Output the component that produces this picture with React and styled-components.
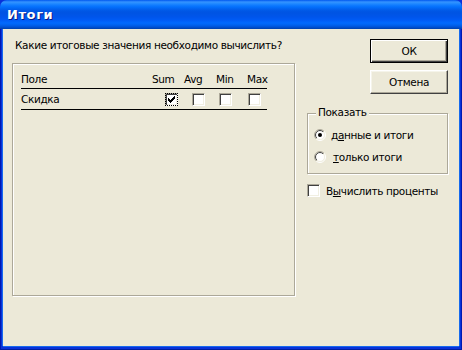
import React, { useId } from "react";
import styled, { createGlobalStyle, css } from "styled-components";

const Global = createGlobalStyle`
  html, body { margin: 0; padding: 0; background: #ece9d8; }
  body {
    font-family: "DejaVu Sans", Tahoma, sans-serif;
    font-size: 10.5px;
    letter-spacing: -0.35px;
  }
  * { box-sizing: border-box; }
`;

const Window = styled.div`
  width: 462px;
  height: 350px;
  display: flex;
  flex-direction: column;
  overflow: hidden;
  background: #0831d9;
`;

const TitleBar = styled.div`
  height: 29px;
  flex: none;
  display: flex;
  align-items: center;
  padding: 0 0 0 7px;
  border-radius: 7px 7px 0 0;
  background: linear-gradient(
    to bottom,
    #0058ee 0px,
    #3593ff 2px,
    #288eff 3px,
    #127dff 5px,
    #036ffc 7px,
    #0262ee 9px,
    #0057e5 11px,
    #0054e3 13px,
    #0055eb 17px,
    #005bf5 20px,
    #026afe 23px,
    #0062ef 25px,
    #0052d6 27px,
    #0040ab 29px
  );
`;

const Title = styled.span`
  font-family: "DejaVu Sans", sans-serif;
  font-weight: bold;
  font-size: 13px;
  color: #fff;
  text-shadow: 1px 1px #0a1883;
  letter-spacing: 0.6px;
`;

const Frame = styled.div`
  flex: 1;
  display: flex;
  padding: 0 3px 4px 3px;
  background: #0831d9;
  box-shadow: inset 1px 0 #0019b0, inset -1px 0 #0019b0, inset 0 -1px #001ea0;
`;

const Body = styled.div`
  flex: 1;
  display: flex;
  gap: 12px;
  padding: 10px 11px 0 9px;
  background: #ece9d8;
  box-shadow: -1px 0 #166aee, 1px 0 #166aee, 0 1px #166aee;
`;

const LeftColumn = styled.div`
  width: 283px;
  display: flex;
  flex-direction: column;
`;

const Prompt = styled.div`
  height: 13px;
  line-height: 13px;
  padding-left: 3px;
  color: #000;
  white-space: nowrap;
`;

const Etched = css`
  border: 1px solid #aca899;
  box-shadow: inset 1px 1px #fff, 1px 1px #fff;
`;

const ListPanel = styled.div`
  ${Etched};
  margin-top: 11px;
  height: 233px;
  padding: 5px 0 0 8px;
`;

const Table = styled.div`
  width: 246px;
  display: grid;
  grid-template-columns: 131px 32px 32px 31px 20px;
`;

const HeadCell = styled.div`
  height: 20px;
  line-height: 20px;
  border-bottom: 1px solid #000;
  color: #000;
  white-space: nowrap;
`;

const Cell = styled.div`
  height: 21px;
  display: flex;
  align-items: center;
  border-bottom: 1px solid #000;
  padding-left: ${(p) => p.$offset || 0}px;
  color: #000;
`;

const RightColumn = styled.div`
  width: 141px;
  display: flex;
  flex-direction: column;
`;

const Button = styled.button`
  align-self: flex-end;
  width: 78px;
  height: 24px;
  margin: 0;
  padding: 0;
  font-family: "DejaVu Sans", sans-serif;
  font-size: 10.5px;
  letter-spacing: -0.35px;
  color: #000;
  background: #ece9d8;
  border: 1px solid;
  border-color: #fff #404040 #404040 #fff;
  box-shadow: inset -1px -1px #aca899, inset 1px 1px #f5f4ea;
  & + & {
    margin-top: 7px;
  }
  ${(p) =>
    p.$default &&
    css`
      border-color: #000;
      box-shadow: inset 1px 1px #fff, inset -1px -1px #404040,
        inset -2px -2px #aca899;
    `}
`;

const GroupBox = styled.div`
  ${Etched};
  position: relative;
  margin-top: 19px;
  height: 61px;
  padding: 13px 0 0 6px;
  display: flex;
  flex-direction: column;
  gap: 7px;
`;

const Legend = styled.span`
  position: absolute;
  top: -8px;
  left: 8px;
  padding: 0 2px;
  line-height: 13px;
  background: #ece9d8;
  color: #000;
`;

const OptionRow = styled.label`
  display: flex;
  align-items: center;
  height: 15px;
  gap: ${(p) => p.$gap ?? 5}px;
  color: #000;
  white-space: nowrap;
  ${(p) =>
    p.$top &&
    css`
      margin-top: ${p.$top}px;
    `}
`;

const Box = styled.span`
  width: 13px;
  height: 13px;
  flex: none;
  display: inline-flex;
  align-items: center;
  justify-content: center;
  background: #fff;
  border: 1px solid;
  border-color: #aca899 #fff #fff #aca899;
  box-shadow: inset 1px 1px #404040, inset -1px -1px #f1efe2;
  ${(p) =>
    p.$focus &&
    css`
      outline: 1px dotted #000;
      outline-offset: -1px;
    `}
`;

const CheckMark = () => (
  <svg width="7" height="7" viewBox="0 0 7 7" shapeRendering="crispEdges">
    <path
      fill="#000"
      d="M6 0h1v1h-1zM5 1h2v1h-2zM0 2h1v1h-1zM4 2h3v1h-3zM0 3h2v1h-2zM3 3h3v1h-3zM0 4h5v1h-5zM1 5h3v1h-3zM2 6h1v1h-1z"
    />
  </svg>
);

const CheckBox = ({ checked, focus }) => (
  <Box $focus={focus}>{checked && <CheckMark />}</Box>
);

const Radio = ({ checked }) => {
  const id = useId().replace(/:/g, "");
  return (
    <svg width="12" height="12" viewBox="0 0 12 12" style={{ flex: "none" }}>
      <defs>
        <linearGradient id={`o${id}`} x1="0" y1="0" x2="1" y2="1">
          <stop offset="0.5" stopColor="#aca899" />
          <stop offset="0.5" stopColor="#ffffff" />
        </linearGradient>
        <linearGradient id={`i${id}`} x1="0" y1="0" x2="1" y2="1">
          <stop offset="0.5" stopColor="#404040" />
          <stop offset="0.5" stopColor="#f1efe2" />
        </linearGradient>
      </defs>
      <circle cx="6" cy="6" r="5.5" fill="none" stroke={`url(#o${id})`} />
      <circle cx="6" cy="6" r="4.5" fill="#fff" stroke={`url(#i${id})`} />
      {checked && <circle cx="6" cy="6" r="2" fill="#000" />}
    </svg>
  );
};

const columns = ["Sum", "Avg", "Min", "Max"];
const offsets = [13, 8, 3, 1];

export default function App() {
  return (
    <>
      <Global />
      <Window>
        <TitleBar>
          <Title>Итоги</Title>
        </TitleBar>
        <Frame>
          <Body>
            <LeftColumn>
              <Prompt>Какие итоговые значения необходимо вычислить?</Prompt>
              <ListPanel>
                <Table>
                  <HeadCell>Поле</HeadCell>
                  {columns.map((c) => (
                    <HeadCell key={c}>{c}</HeadCell>
                  ))}
                  <Cell>Скидка</Cell>
                  {offsets.map((o, i) => (
                    <Cell key={i} $offset={o}>
                      <CheckBox checked={i === 0} focus={i === 0} />
                    </Cell>
                  ))}
                </Table>
              </ListPanel>
            </LeftColumn>
            <RightColumn>
              <Button $default>ОК</Button>
              <Button>Отмена</Button>
              <GroupBox>
                <Legend>Показать</Legend>
                <OptionRow>
                  <Radio checked />
                  <span>
                    д<u>а</u>нные и итоги
                  </span>
                </OptionRow>
                <OptionRow $gap={7}>
                  <Radio />
                  <span>
                    <u>т</u>олько итоги
                  </span>
                </OptionRow>
              </GroupBox>
              <OptionRow $top={9} $gap={6}>
                <CheckBox />
                <span>
                  В<u>ы</u>числить проценты
                </span>
              </OptionRow>
            </RightColumn>
          </Body>
        </Frame>
      </Window>
    </>
  );
}
